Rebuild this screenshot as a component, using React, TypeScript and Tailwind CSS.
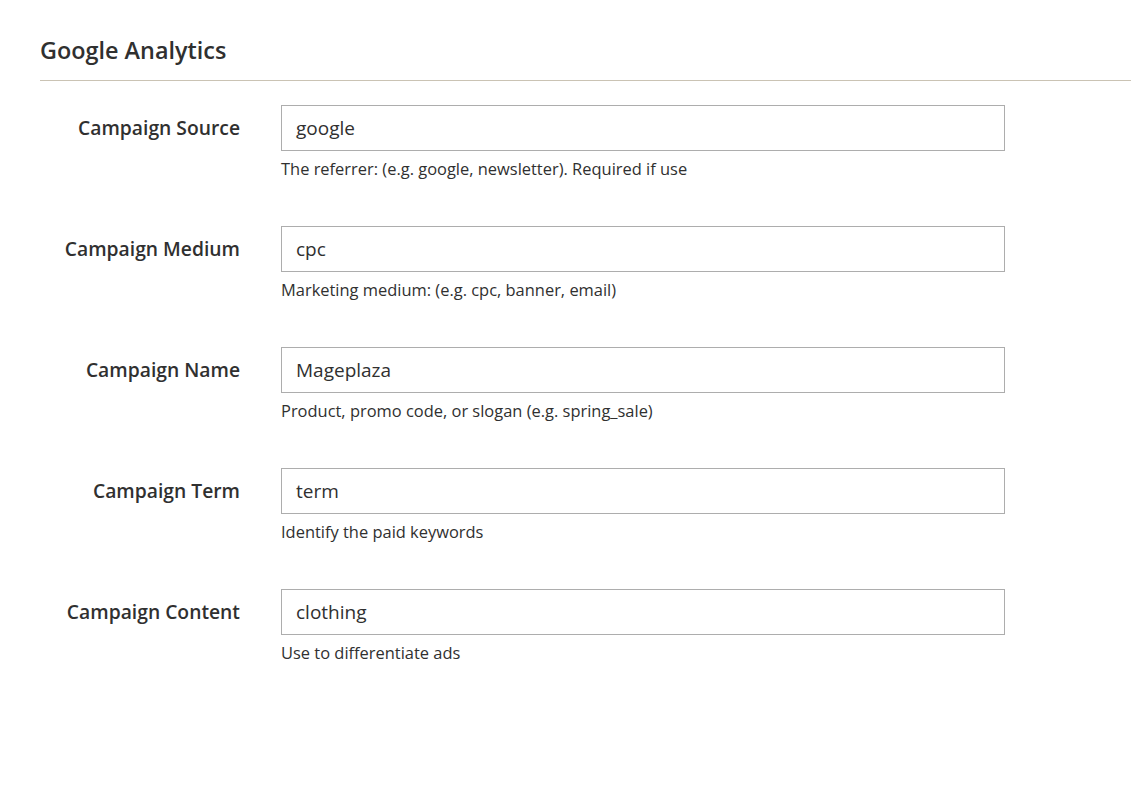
import React from "react";

const rows = [
  { label: "Campaign Source", value: "google", note: "The referrer: (e.g. google, newsletter). Required if use" },
  { label: "Campaign Medium", value: "cpc", note: "Marketing medium: (e.g. cpc, banner, email)" },
  { label: "Campaign Name", value: "Mageplaza", note: "Product, promo code, or slogan (e.g. spring_sale)" },
  { label: "Campaign Term", value: "term", note: "Identify the paid keywords" },
  { label: "Campaign Content", value: "clothing", note: "Use to differentiate ads" },
];

export default function App() {
  return (
    <div className="min-h-[791px] bg-white text-[#303030]" style={{ fontFamily: '"Open Sans", sans-serif' }}>
      <div className="pl-[40px]">
        <div className="border-b border-[#cac3b4] pt-[34px] pb-[14px]">
          <h2 className="text-[23.4px] leading-[32px] font-semibold text-[#303030]">Google Analytics</h2>
        </div>
        <div className="pt-[24px]">
          {rows.map((r) => (
            <div key={r.label} className="flex h-[121px]">
              <div className="w-[200px] h-[46px] pt-[1px] flex items-center justify-end text-[19.3px] font-semibold text-[#303030] whitespace-nowrap">
                {r.label}
              </div>
              <div className="ml-[41px] w-[724px]">
                <div className="h-[46px] border border-[#adadad] flex items-center pl-[14px] text-[19px] text-[#303030]">
                  {r.value}
                </div>
                <div className="mt-[6px] text-[16.45px] leading-[24px] text-[#303030]">{r.note}</div>
              </div>
            </div>
          ))}
        </div>
      </div>
    </div>
  );
}
